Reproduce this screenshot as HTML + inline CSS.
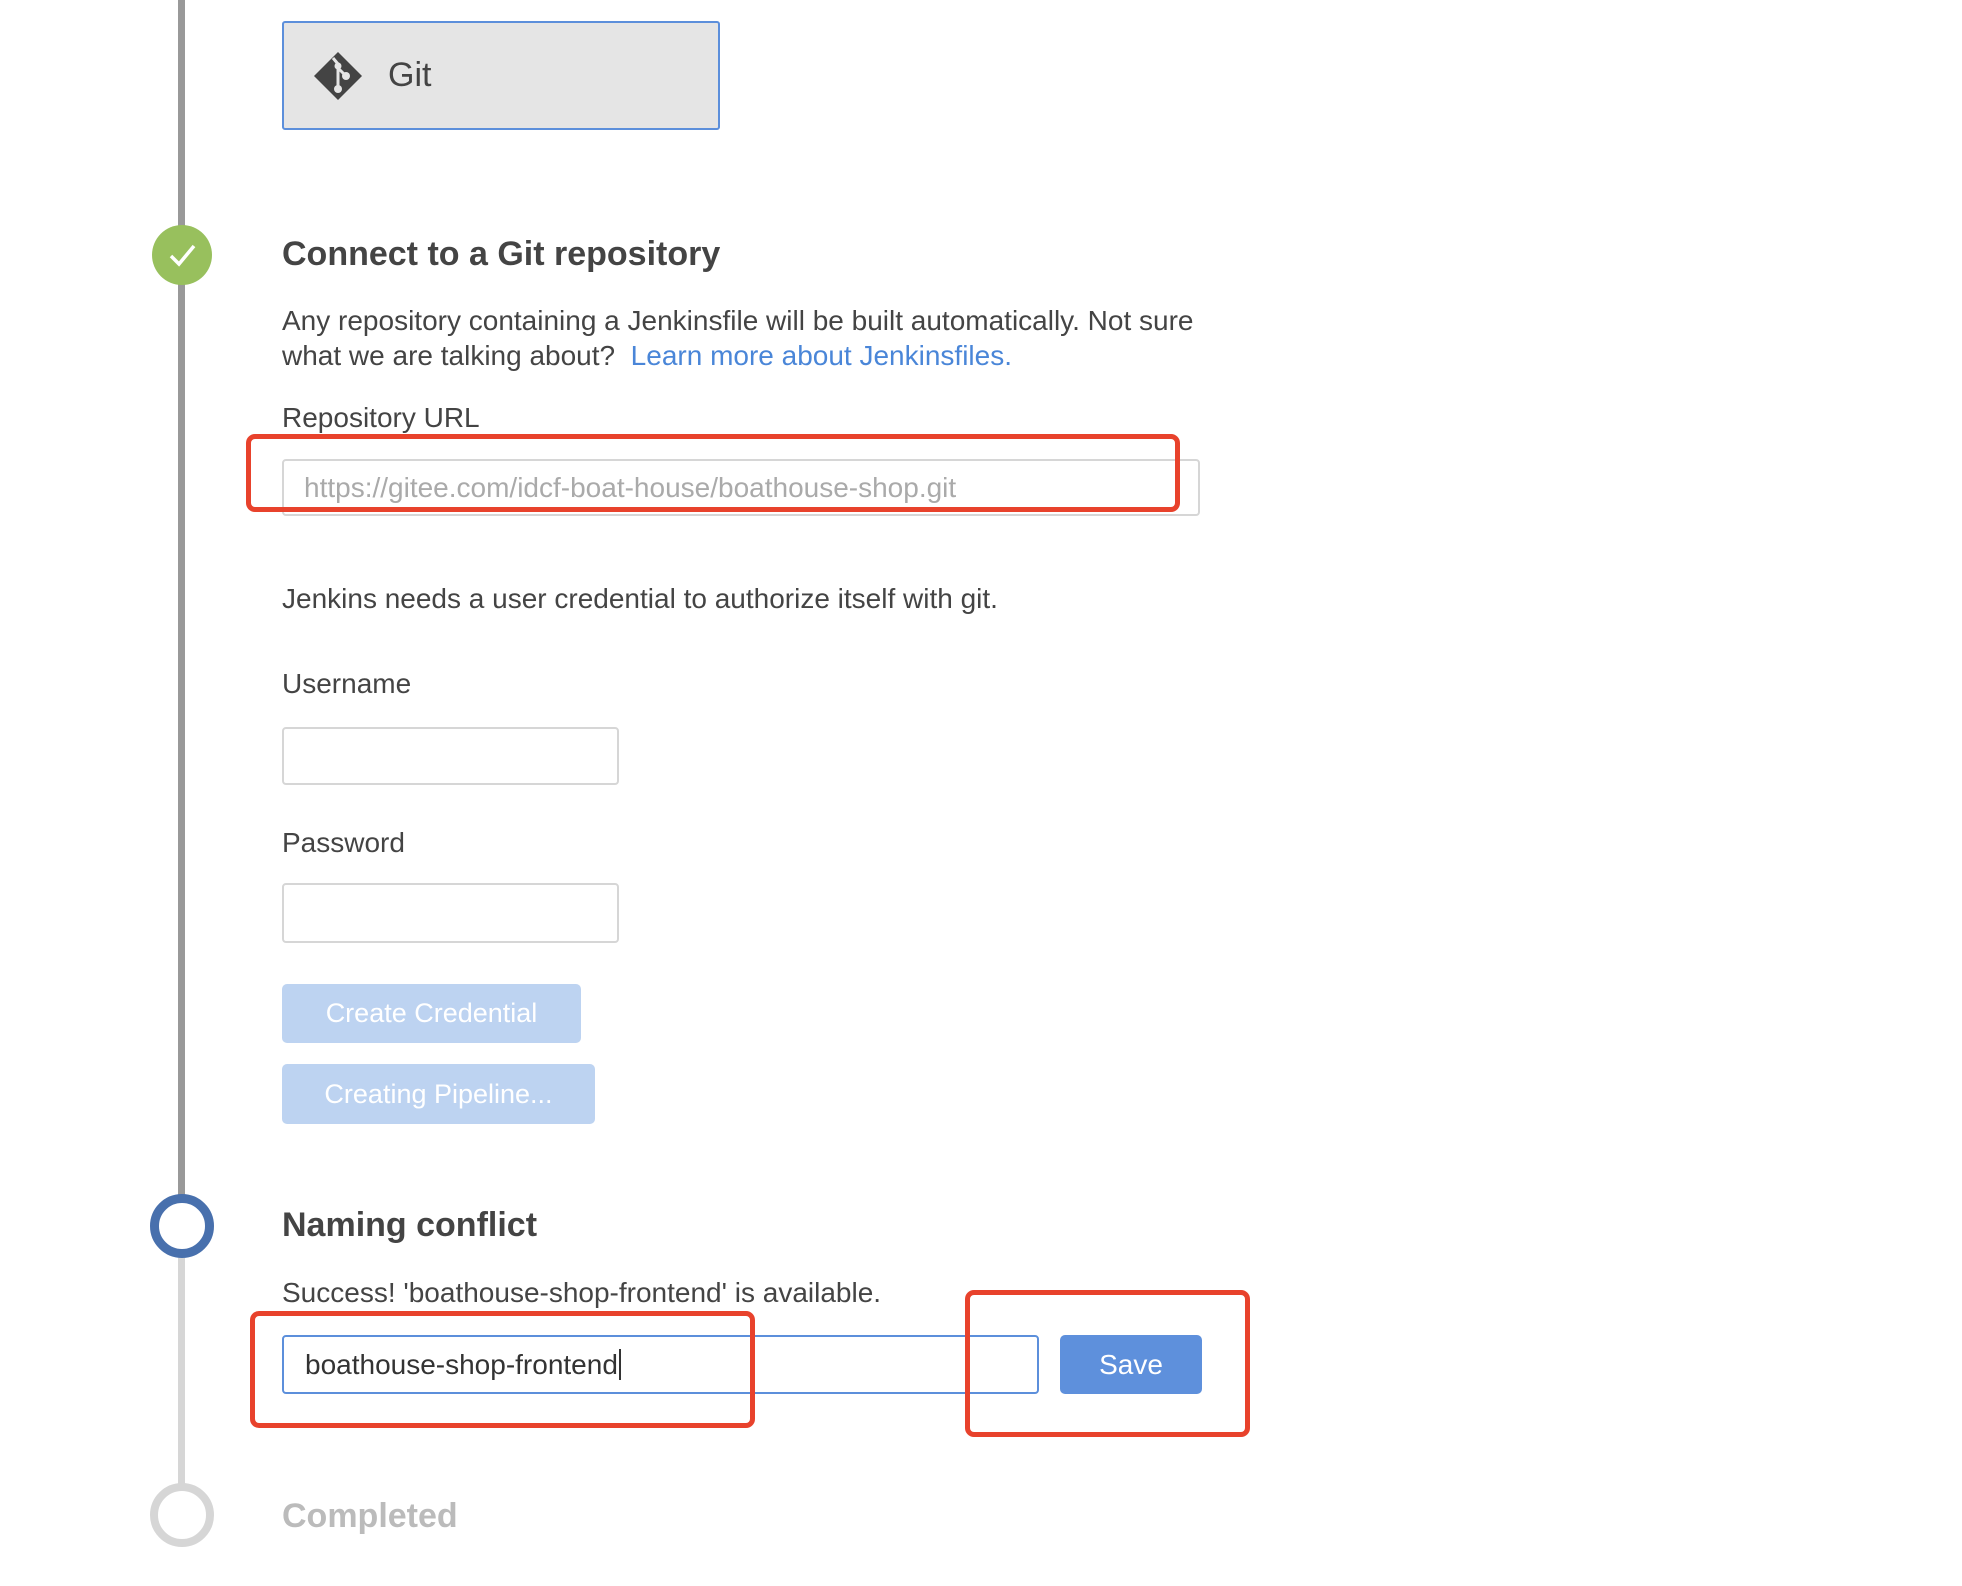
<!DOCTYPE html>
<html><head><meta charset="utf-8"><style>
body{margin:0;width:1962px;height:1586px;background:#fff;position:relative;overflow:hidden;font-family:"Liberation Sans",sans-serif;color:#444}
.a{position:absolute}
.t{position:absolute;white-space:nowrap;font-size:28px;line-height:32px;color:#444;letter-spacing:0}
.h{position:absolute;white-space:nowrap;font-size:34px;font-weight:bold;color:#444;line-height:38px;letter-spacing:0}
.inp{position:absolute;box-sizing:border-box;border:2px solid #d6d6d6;border-radius:4px;background:#fff}
.btn{position:absolute;box-sizing:border-box;background:#bdd3f1;border-radius:5px;color:#fff;font-size:27px;text-align:center}
.red{position:absolute;box-sizing:border-box;border:5px solid #e8422c;border-radius:9px}
</style></head><body>
<div class="a" style="left:178px;top:0;width:7px;height:1200px;background:#999"></div>
<div class="a" style="left:178px;top:1258px;width:7px;height:230px;background:#d6d6d6"></div>

<div class="a" style="left:282px;top:21px;width:438px;height:109px;box-sizing:border-box;background:#e5e5e5;border:2px solid #5c8fdb;border-radius:3px"></div>
<svg class="a" style="left:314px;top:52px" width="48" height="48" viewBox="0 0 48 48">
<path d="M24 0 L48 24 L24 48 L0 24 Z" fill="#444"/>
<path d="M19 6 L24 12 M24 12 L24 38 M24 16 L32 24" stroke="#e5e5e5" stroke-width="3" fill="none"/>
<circle cx="24" cy="37" r="4" fill="#e5e5e5"/><circle cx="32" cy="24" r="4" fill="#e5e5e5"/><circle cx="24" cy="14" r="3.5" fill="#e5e5e5"/>
</svg>
<div class="t" style="left:388px;top:56px;font-size:34px;line-height:38px">Git</div>

<div class="a" style="left:152px;top:225px;width:60px;height:60px;border-radius:50%;background:#98c05d"></div>
<svg class="a" style="left:152px;top:225px" width="60" height="60"><path d="M19 31 L27 39 L42 21" stroke="#fff" stroke-width="3.5" fill="none"/></svg>
<div class="h" style="left:282px;top:235px">Connect to a Git repository</div>
<div class="t" style="left:282px;top:305px">Any repository containing a Jenkinsfile will be built automatically. Not sure</div>
<div class="t" style="left:282px;top:340px">what we are talking about?&nbsp; <span style="color:#4a86d8">Learn more about Jenkinsfiles.</span></div>
<div class="t" style="left:282px;top:402px">Repository URL</div>
<div class="inp" style="left:282px;top:459px;width:918px;height:57px"></div>
<div class="t" style="left:304px;top:472px;color:#aaa">https://gitee.com/idcf-boat-house/boathouse-shop.git</div>
<div class="red" style="left:246px;top:434px;width:934px;height:78px"></div>

<div class="t" style="left:282px;top:583px">Jenkins needs a user credential to authorize itself with git.</div>
<div class="t" style="left:282px;top:668px">Username</div>
<div class="inp" style="left:282px;top:727px;width:337px;height:58px"></div>
<div class="t" style="left:282px;top:827px">Password</div>
<div class="inp" style="left:282px;top:883px;width:337px;height:60px"></div>
<div class="btn" style="left:282px;top:984px;width:299px;height:59px;line-height:59px">Create Credential</div>
<div class="btn" style="left:282px;top:1064px;width:313px;height:60px;line-height:60px">Creating Pipeline...</div>

<div class="a" style="left:150px;top:1194px;width:64px;height:64px;box-sizing:border-box;border-radius:50%;border:9px solid #4870ad;background:#fff"></div>
<div class="h" style="left:282px;top:1206px">Naming conflict</div>
<div class="t" style="left:282px;top:1277px">Success! 'boathouse-shop-frontend' is available.</div>
<div class="inp" style="left:282px;top:1335px;width:757px;height:59px;border-color:#5c8fdb"></div>
<div class="t" style="left:305px;top:1349px;color:#333">boathouse-shop-frontend<span style="border-left:2px solid #333;margin-left:1px"></span></div>
<div class="a" style="left:1060px;top:1335px;width:142px;height:59px;background:#5e90dc;border-radius:5px;color:#fff;font-size:28px;line-height:59px;text-align:center">Save</div>
<div class="red" style="left:250px;top:1311px;width:505px;height:117px"></div>
<div class="red" style="left:965px;top:1290px;width:285px;height:147px"></div>

<div class="a" style="left:150px;top:1483px;width:64px;height:64px;box-sizing:border-box;border-radius:50%;border:8px solid #d6d6d6;background:#fff"></div>
<div class="h" style="left:282px;top:1497px;color:#bbb">Completed</div>
</body></html>
